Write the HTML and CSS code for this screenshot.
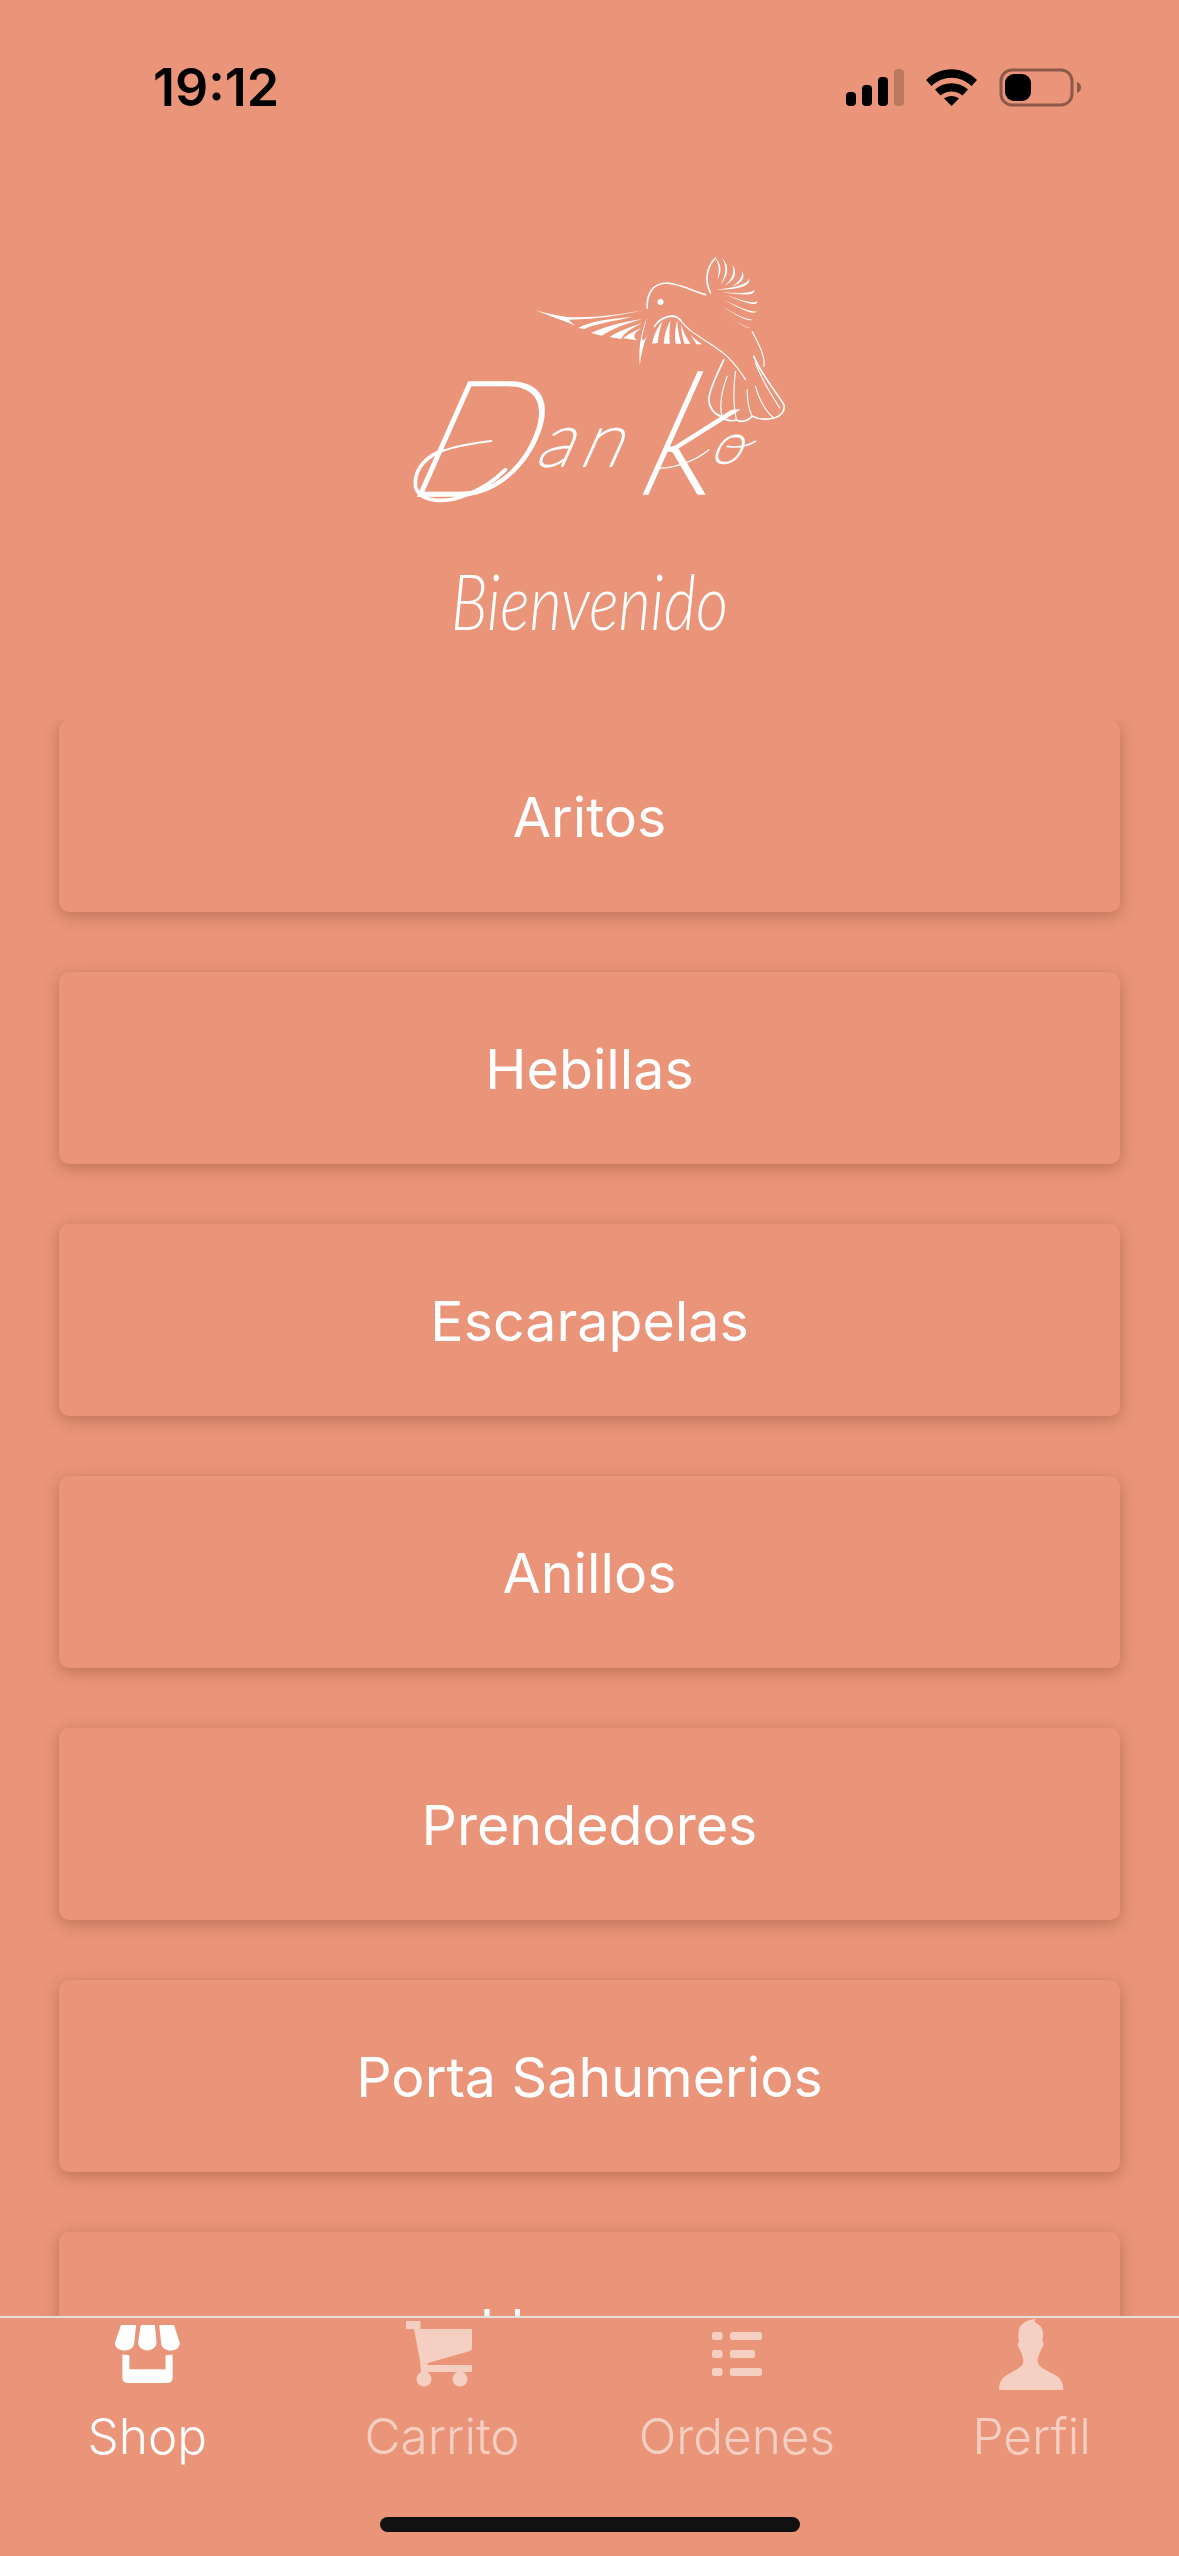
FILE: index.html
```html
<!DOCTYPE html>
<html lang="es">
<head>
    <meta charset="UTF-8">
    <meta name="viewport" content="width=device-width, initial-scale=1.0">
    <title>Danko</title>
    <link rel="stylesheet" href="styles.css">
</head>
<body>
    <div class="phone">
        <header class="status-bar">
            <span class="status-time">19:12</span>
            <div class="status-icons">
                <svg class="icon-signal" width="58" height="37" viewBox="0 0 58 37">
                    <rect x="0" y="23" width="10" height="14" rx="4"/>
                    <rect x="16" y="16" width="10" height="21" rx="4"/>
                    <rect x="32" y="8" width="10" height="29" rx="4"/>
                    <rect x="48" y="0" width="10" height="37" rx="4" opacity="0.2"/>
                </svg>
                <svg class="icon-wifi" width="51" height="37" viewBox="0 0 51 37">
                    <path d="M0 11 C14 -3.500 37 -3.500 51 11 L45.500 17 C34 6 17 6 5.500 17Z"/>
                    <path d="M9 20.500 C18 12 33 12 42 20.500 L36.500 26.500 C30 21 21 21 14.500 26.500Z"/>
                    <path d="M18 29.500 C22 26 29 26 33 29.500 L25.500 37Z"/>
                </svg>
                <svg class="icon-battery" width="83" height="39" viewBox="0 0 83 39">
                    <rect x="2" y="2" width="71" height="35" rx="11" fill="none" stroke="#000" stroke-width="3" opacity="0.4"/>
                    <rect x="6" y="6" width="26" height="27" rx="9"/>
                    <path d="M78 14 C81 15 82 17 82 19.500 C82 22 81 24 78 25Z" opacity="0.4"/>
                </svg>
            </div>
        </header>

        <svg class="logo" width="400" height="254" viewBox="28.500 70 1200 762">
            <g fill="#fff">
                <path d="M465 242 C500 252 530 258 560 262 C640 266 720 254 790 241 C720 258 650 268 565 270 C570 276 580 284 585 288 C540 270 500 256 465 242Z"/>
                <path d="M593 295 C620 278 680 268 755 262 C690 276 640 284 612 298Z"/>
                <path d="M632 310 C670 292 720 278 785 268 C730 284 690 300 664 318Z"/>
                <path d="M688 322 C710 306 750 292 785 280 C755 296 730 310 722 328Z"/>
                <path d="M728 326 C740 316 760 304 782 296 C765 308 752 320 770 332Z"/>
                <circle cx="840" cy="217" r="9"/>
                <path d="M800 262 C785 300 772 350 778 408 C782 370 790 340 803 310 C792 335 784 340 785 320Z"/>
                <path d="M815 342 C820 315 830 295 846 275 C838 300 832 322 832 340Z"/>
                <path d="M850 342 C852 315 858 295 870 272 C866 300 866 322 868 342Z"/>
                <path d="M885 342 C882 320 884 295 890 272 C892 300 896 322 902 342Z"/>
                <path d="M912 342 C906 325 902 305 902 285 C908 305 918 325 930 342Z"/>
                <path d="M965 344 C952 335 940 325 930 315 C940 330 945 340 948 344Z"/>
                <path d="M1005 85 Q1032 115 1010 150 Q1022 115 1005 85Z"/>
                <path d="M1025 85 Q1058 120 1020 165 Q1046 120 1025 85Z"/>
                <path d="M1055 105 Q1082 140 1030 170 Q1068 140 1055 105Z"/>
                <path d="M1085 125 Q1100 155 1055 170 Q1088 150 1085 125Z"/>
                <path d="M1105 145 Q1118 180 1005 180 Q1106 170 1105 145Z"/>
                <path d="M1120 180 Q1132 204 1025 188 Q1116 194 1120 180Z"/>
                <path d="M1130 215 Q1136 238 1035 195 Q1122 226 1130 215Z"/>
                <path d="M1130 245 Q1120 262 1030 210 Q1110 250 1130 245Z"/>
                <path d="M1115 270 Q1100 280 1025 230 Q1090 270 1115 270Z"/>
                <path d="M1110 295 Q1090 298 1020 235 Q1080 290 1110 295Z"/>
            </g>
            <g fill="none" stroke="#fff" stroke-linecap="round" stroke-linejoin="round">
                <path stroke-width="5" d="M800 235 C798 195 815 160 860 160 C900 163 940 185 975 195"/>
                <path stroke-width="5" d="M990 190 C970 150 980 110 1005 85"/>
                <path stroke-width="5" d="M822 290 C840 262 880 248 900 272"/>
                <path stroke-width="3.500" d="M900 272 C930 315 990 335 1040 380 C1060 400 1080 425 1095 450"/>
                <path stroke-width="3.500" d="M1115 305 C1135 345 1155 380 1150 410"/>
                <path stroke-width="5" d="M1030 390 C1010 435 985 480 985 510 C987 540 1005 555 1025 562 C1040 575 1055 575 1068 571 C1085 580 1105 572 1115 560 C1135 570 1160 570 1180 565 C1200 560 1215 545 1210 525 C1190 490 1145 440 1120 380"/>
                <path stroke-width="3.500" d="M1040 440 C1025 480 1015 525 1025 562"/>
                <path stroke-width="3.500" d="M1065 425 C1058 470 1058 530 1068 571"/>
                <path stroke-width="3.500" d="M1100 480 C1100 510 1105 540 1115 560"/>
                <path stroke-width="3.500" d="M1125 470 C1135 505 1155 545 1180 565"/>
                <path stroke-width="3.500" d="M1125 400 C1145 455 1175 500 1198 535"/>
                <!-- swashes of the signature -->
                <path stroke-width="11" d="M172 668 C125 690 100 730 105 770 C115 815 190 825 260 795 C300 780 340 755 375 720"/>
                <path stroke-width="5" d="M1040 650 C1070 655 1100 650 1125 635"/>
                <path stroke-width="6" d="M175 668 C220 650 280 640 332 634"/>
                <path stroke-width="4" d="M825 715 C880 720 950 690 985 660"/>
            </g>
            <text class="logo-text" transform="skewX(-24)">
                <tspan class="logo-d" x="415" y="795">D</tspan><tspan class="logo-an" x="775" y="708">an</tspan><tspan class="logo-k" x="1100" y="790">k</tspan><tspan class="logo-o" x="1297" y="700">o</tspan>
            </text>
        </svg>

        <h1 class="welcome">Bienvenido</h1>

        <main class="menu">
            <a class="menu-item">Aritos</a>
            <a class="menu-item">Hebillas</a>
            <a class="menu-item">Escarapelas</a>
            <a class="menu-item">Anillos</a>
            <a class="menu-item">Prendedores</a>
            <a class="menu-item">Porta Sahumerios</a>
            <a class="menu-item">Llaveros</a>
        </main>

        <footer class="tabbar">
            <nav class="tabs">
                <a class="tab tab-active">
                    <span class="tab-icon">
                        <svg width="65" height="58" viewBox="74 44 194 173" fill="currentColor">
                            <path d="M92 44 L137 44 L131 100 C128 127 72 128 74 96Z"/>
                            <path d="M151 44 L193 44 L198 95 C198 128 143 128 143 95Z"/>
                            <path d="M206 44 L250 44 L267 96 C269 128 214 127 212 100Z"/>
                            <path d="M96 132 L117 134 L117 176 L225 176 L225 134 L246 132 L246 200 C246 212 240 217 230 217 L112 217 C102 217 96 212 96 200Z"/>
                        </svg>
                    </span>
                    <span>Shop</span>
                </a>
                <a class="tab">
                    <span class="tab-icon tab-icon-cart">
                        <svg width="66" height="66" viewBox="0 0 66 66" fill="currentColor">
                            <path d="M0 0 H14.500 V8 H66 V27 Q66 29 64 30 L22 42 Q20 44 23 44 H66 V51 H15 L14 40 L8 8 H0Z"/>
                            <circle cx="18" cy="58" r="7.500"/>
                            <circle cx="54" cy="58" r="7.500"/>
                        </svg>
                    </span>
                    <span>Carrito</span>
                </a>
                <a class="tab">
                    <span class="tab-icon">
                        <svg width="50" height="44" viewBox="0 0 50 44" fill="currentColor">
                            <rect x="0" y="0" width="10.500" height="8" rx="2.500"/>
                            <rect x="18" y="0" width="32" height="8" rx="2.500"/>
                            <rect x="0" y="18" width="10.500" height="8" rx="2.500"/>
                            <rect x="18" y="18" width="25" height="8" rx="2.500"/>
                            <rect x="0" y="36" width="10.500" height="8" rx="2.500"/>
                            <rect x="18" y="36" width="32" height="8" rx="2.500"/>
                        </svg>
                    </span>
                    <span>Ordenes</span>
                </a>
                <a class="tab">
                    <span class="tab-icon">
                        <svg width="66" height="71" viewBox="57 27 198 213" fill="currentColor">
                            <path d="M165 27 C150 28 130 35 120 50 C113 65 115 85 117 95 C112 100 113 110 118 115 C122 125 130 140 130 155 C128 170 110 178 90 190 C72 198 57 212 57 240 L250 240 C250 212 235 198 215 190 C195 178 175 170 173 155 C172 140 182 125 186 113 C192 108 192 98 187 93 C190 80 192 60 180 47 C172 42 165 38 163 33 C165 30 168 28 165 27Z"/>
                        </svg>
                    </span>
                    <span>Perfil</span>
                </a>
            </nav>
            <div class="home-indicator"></div>
        </footer>
    </div>
</body>
</html>
```

FILE: styles.css
```css
* {
    box-sizing: border-box;
}

body {
    margin: 0;
    background-color: #ea9579;
    font-family: Inter, "Liberation Sans", sans-serif;
}

.phone {
    width: 1179px;
    height: 2556px;
    display: flex;
    flex-direction: column;
    overflow: hidden;
    color: #fff;
}

/* status bar */
.status-bar {
    flex: none;
    height: 130px;
    padding: 58px 97px 0 153px;
    display: flex;
    justify-content: space-between;
    align-items: flex-start;
    color: #000;
}

.status-time {
    font-size: 52px;
    font-weight: 600;
    line-height: 60px;
}

.status-icons {
    display: flex;
    align-items: center;
    gap: 22px;
    padding-top: 10px;
}

.status-icons svg {
    display: block;
    fill: #000;
}

/* logo + welcome */
.logo {
    flex: none;
    display: block;
    margin: 123px auto 0;
    overflow: visible;
}

.logo-text {
    font-family: Lato, sans-serif;
    font-weight: 100;
    fill: #fff;
    stroke: #fff;
    stroke-width: 6;
}

.logo-d {
    font-size: 480px;
    stroke-width: 10;
}

.logo-an {
    font-size: 225px;
    letter-spacing: 24px;
}

.logo-k {
    font-size: 500px;
    stroke-width: 11;
}

.logo-o {
    font-size: 165px;
}

.welcome {
    flex: none;
    height: 213px;
    margin: 0;
    padding-top: 44px;
    text-align: center;
    font-family: Lato, sans-serif;
    font-size: 76px;
    font-style: italic;
    font-weight: 300;
    line-height: 100px;
    transform: scaleX(0.82);
}

/* category list */
.menu {
    flex: 1;
    min-height: 0;
    padding: 0 59px;
    display: flex;
    flex-direction: column;
    gap: 60px;
    overflow: hidden;
}

.menu-item {
    flex: none;
    height: 192px;
    padding-top: 1px;
    display: flex;
    align-items: center;
    justify-content: center;
    border-radius: 10px;
    background-color: #ea9579;
    box-shadow: 0 4px 16px rgba(90, 40, 20, 0.32);
    font-size: 55.500px;
}

/* bottom tabs */
.tabbar {
    flex: none;
    height: 240px;
    display: flex;
    flex-direction: column;
    border-top: 2px solid #e3dfdc;
    background-color: #ea9579;
}

.tabs {
    display: flex;
}

.tab {
    flex: 1;
    display: flex;
    flex-direction: column;
    align-items: center;
    gap: 16px;
    color: #f5cfc1;
    font-size: 49.500px;
    font-weight: 300;
    line-height: 60px;
}

.tab-active {
    color: #fff;
}

.tab-icon {
    height: 72px;
    display: flex;
    align-items: center;
}

.tab-icon-cart {
    margin-right: 7px;
}

.home-indicator {
    width: 420px;
    height: 15px;
    margin: auto auto 24px;
    border-radius: 8px;
    background-color: #111;
}
```
